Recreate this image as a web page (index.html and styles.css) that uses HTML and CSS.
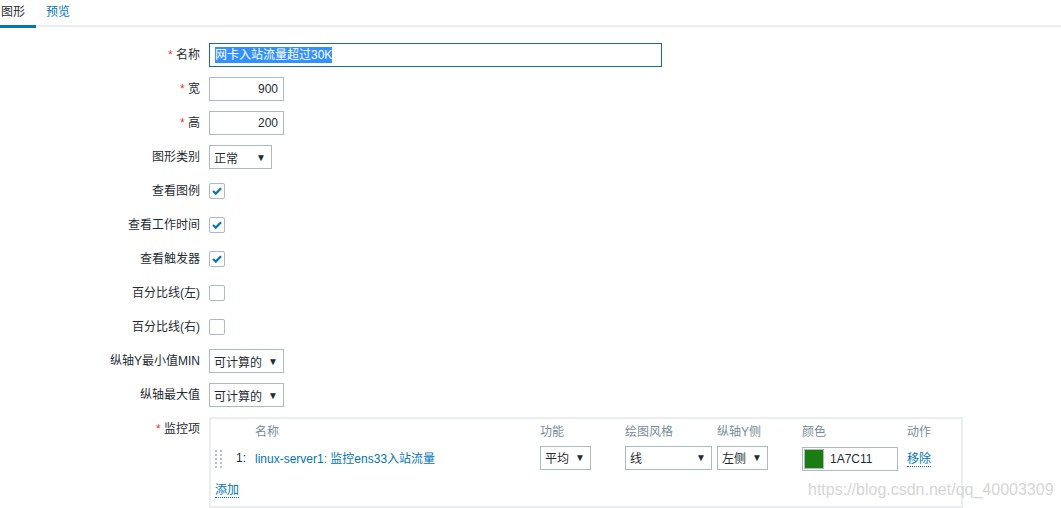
FILE: index.html
```html
<!DOCTYPE html>
<html lang="zh">
<head>
<meta charset="utf-8">
<link rel="stylesheet" href="styles.css">
</head>
<body>
<div class="tabs">
  <span class="tab active">图形</span>
  <span class="tab link">预览</span>
</div>
<div class="form">
  <div class="row">
    <label class="lbl"><span class="ast">*</span> 名称</label>
    <div class="ctl"><div class="input name focus"><span class="sel">网卡入站流量超过30K</span></div></div>
  </div>
  <div class="row">
    <label class="lbl"><span class="ast">*</span> 宽</label>
    <div class="ctl"><div class="input num">900</div></div>
  </div>
  <div class="row">
    <label class="lbl"><span class="ast">*</span> 高</label>
    <div class="ctl"><div class="input num">200</div></div>
  </div>
  <div class="row">
    <label class="lbl">图形类别</label>
    <div class="ctl"><div class="select w62"><span>正常</span><span class="arr">▼</span></div></div>
  </div>
  <div class="row">
    <label class="lbl">查看图例</label>
    <div class="ctl"><span class="cb"><svg width="10" height="8" viewBox="0 0 10 8"><path d="M1 4 L3.8 6.6 L9 1.2" fill="none" stroke="#0275b8" stroke-width="2.2"/></svg></span></div>
  </div>
  <div class="row">
    <label class="lbl">查看工作时间</label>
    <div class="ctl"><span class="cb"><svg width="10" height="8" viewBox="0 0 10 8"><path d="M1 4 L3.8 6.6 L9 1.2" fill="none" stroke="#0275b8" stroke-width="2.2"/></svg></span></div>
  </div>
  <div class="row">
    <label class="lbl">查看触发器</label>
    <div class="ctl"><span class="cb"><svg width="10" height="8" viewBox="0 0 10 8"><path d="M1 4 L3.8 6.6 L9 1.2" fill="none" stroke="#0275b8" stroke-width="2.2"/></svg></span></div>
  </div>
  <div class="row">
    <label class="lbl">百分比线(左)</label>
    <div class="ctl"><span class="cb"></span></div>
  </div>
  <div class="row">
    <label class="lbl">百分比线(右)</label>
    <div class="ctl"><span class="cb"></span></div>
  </div>
  <div class="row">
    <label class="lbl">纵轴Y最小值MIN</label>
    <div class="ctl"><div class="select w74"><span>可计算的</span><span class="arr">▼</span></div></div>
  </div>
  <div class="row">
    <label class="lbl">纵轴最大值</label>
    <div class="ctl"><div class="select w74"><span>可计算的</span><span class="arr">▼</span></div></div>
  </div>
  <div class="row top">
    <label class="lbl"><span class="ast">*</span> 监控项</label>
    <div class="ctl">
      <div class="items">
        <div class="grid head">
          <span></span><span></span><span>名称</span><span>功能</span><span>绘图风格</span><span>纵轴Y侧</span><span>颜色</span><span>动作</span>
        </div>
        <div class="grid item">
          <span class="drag"><i></i><i></i><i></i><i></i><i></i><i></i><i></i><i></i><i></i><i></i></span>
          <span>1:</span>
          <span class="link">linux-server1: 监控ens33入站流量</span>
          <span><div class="select w50"><span>平均</span><span class="arr">▼</span></div></span>
          <span><div class="select w86"><span>线</span><span class="arr">▼</span></div></span>
          <span><div class="select w50"><span>左侧</span><span class="arr">▼</span></div></span>
          <span><div class="color"><span class="swatch"></span><span>1A7C11</span></div></span>
          <span><span class="link dotted">移除</span></span>
        </div>
        <div class="add"><span class="link dotted">添加</span></div>
      </div>
    </div>
  </div>
</div>
<div class="watermark">https://blog.csdn.net/qq_40003309</div>
</body>
</html>
```

FILE: styles.css
```css
html, body {
  margin: 0;
  padding: 0;
  background: #fff;
}
body {
  font-family: "Liberation Sans", Arial, "Noto Sans CJK SC", sans-serif;
  font-size: 12px;
  color: #1f2c33;
  width: 1061px;
  height: 508px;
  overflow: hidden;
  position: relative;
}
.tabs {
  display: flex;
  height: 25px;
  border-bottom: 2px solid #ebeef0;
}
.tab {
  display: flex;
  align-items: flex-start;
  padding-top: 3px;
  line-height: 18px;
  height: 25px;
  box-sizing: border-box;
}
.tab.active {
  width: 36px;
  padding-left: 1px;
  border-bottom: 3px solid #0275b8;
  height: 28px;
  margin-bottom: -3px;
}
.tab.link {
  margin-left: 10px;
  color: #0275b8;
}
.form {
  display: flex;
  flex-direction: column;
  gap: 10px;
  padding-top: 16px;
}
.row {
  display: flex;
  align-items: center;
  min-height: 24px;
}
.row.top { align-items: flex-start; }
.row.top .lbl { padding-top: 4px; }
.lbl {
  width: 200px;
  text-align: right;
  flex: none;
  line-height: 16px;
}
.ast { color: #e33734; }
.ctl {
  margin-left: 9px;
  display: flex;
  align-items: center;
}
.input {
  box-sizing: border-box;
  height: 24px;
  border: 1px solid #acbbc2;
  padding: 0 5px;
  display: flex;
  align-items: center;
  background: #fff;
}
.input.name { width: 453px; }
.input.focus { border-color: #1b67a2; }
.sel {
  background: #3390ff;
  color: #fff;
  line-height: 16px;
}
.input.num {
  width: 75px;
  justify-content: flex-end;
}
.select {
  box-sizing: border-box;
  height: 24px;
  border: 1px solid #acbbc2;
  padding: 0 5px 0 4px;
  display: flex;
  align-items: center;
  justify-content: space-between;
  background: #fff;
  color: #1f2c33;
}
.select .arr { font-size: 10px; color: #1f2c33; padding-right: 0; }
.w62 { width: 63px; }
.w74 { width: 75px; }
.w50 { width: 51px; }
.w86 { width: 87px; }
.cb {
  box-sizing: border-box;
  width: 16px;
  height: 16px;
  border: 1px solid #acbbc2;
  border-radius: 2px;
  display: flex;
  align-items: center;
  justify-content: center;
  background: #fff;
}
.items {
  box-sizing: border-box;
  width: 754px;
  height: 91px;
  border: 2px solid #ebeef0;
}
.grid {
  display: grid;
  grid-template-columns: 25px 19px 285px 85px 92px 85px 105px auto;
  align-items: center;
}
.head {
  height: 22px;
  color: #768d99;
}
.item {
  margin-top: 3px;
  height: 24px;
}
.drag {
  display: grid;
  grid-template-columns: 2px 2px;
  column-gap: 3px;
  row-gap: 2px;
  padding-left: 4px;
  width: 8px;
  margin-top: 2px;
}
.drag i {
  display: block;
  width: 2px;
  height: 2px;
  background: #b8c3c8;
}
.link { color: #0275b8; }
.dotted { border-bottom: 1px dotted #0275b8; }
.color {
  box-sizing: border-box;
  width: 96px;
  height: 24px;
  margin-top: 3px;
  border: 1px solid #acbbc2;
  display: flex;
  align-items: center;
  padding-left: 1px;
  gap: 6px;
}
.swatch {
  box-sizing: border-box;
  width: 20px;
  height: 20px;
  background: #1a7c11;
  border: 1px solid #acbbc2;
}
.add {
  margin-top: 10px;
  height: 22px;
  display: flex;
  align-items: center;
  padding-left: 4px;
}
.watermark {
  position: absolute;
  left: 808px;
  top: 481px;
  font-family: "Liberation Sans", Arial, sans-serif;
  font-size: 16px;
  color: #d6d6d6;
}
```
